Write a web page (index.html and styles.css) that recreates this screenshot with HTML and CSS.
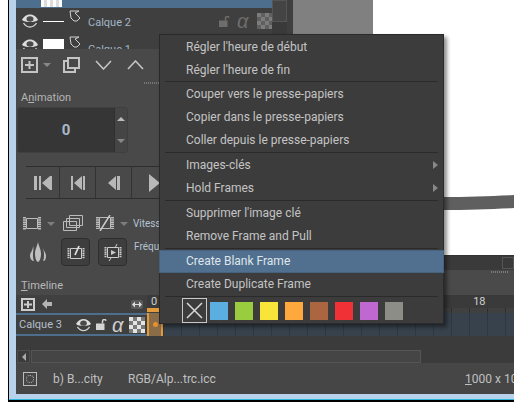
FILE: index.html
```html
<!DOCTYPE html>
<html lang="fr">
<head>
    <meta charset="UTF-8">
    <title>Timeline</title>
    <link rel="stylesheet" href="styles.css">
</head>
<body>
    <svg class="defs" width="0" height="0">
        <symbol id="eye" viewBox="0 0 16 14">
            <path d="M0 6C2 2 5 .5 8 .5S14 2 16 6c-2 1.500-4 2-8 2S2 7.500 0 6z" fill="#dcdcdc"/>
            <ellipse cx="8" cy="5" rx="3.500" ry="2.800" fill="#4a4a4a"/>
            <path d="M1.500 9c2 3 4 4 6.500 4s4.500-1 6.500-4" fill="none" stroke="#d0d0d0" stroke-width="1.300"/>
        </symbol>
        <symbol id="inherit" viewBox="0 0 12 12">
            <path d="M1 1h9l-4 2 5 5-3 3H5L2 8z" fill="none" stroke="#d0d0d0"/>
        </symbol>
        <symbol id="lock" viewBox="0 0 11 11">
            <path d="M0 4.500h8.500V11H0z" fill="currentColor"/>
            <path d="M6.500 4.500V2.200a1.800 1.800 0 0 1 3.500-.5" fill="none" stroke="currentColor" stroke-width="1.500"/>
        </symbol>
        <symbol id="checker" viewBox="0 0 16 16">
            <rect width="16" height="16" fill="currentColor"/>
            <path d="M4 0h4v4H4zM12 0h4v4h-4zM0 4h4v4H0zM8 4h4v4H8zM4 8h4v4H4zM12 8h4v4h-4zM0 12h4v4H0zM8 12h4v4H8z" fill="#555" fill-opacity=".75"/>
        </symbol>
    </svg>

    <div class="window">
        <div class="row-top">
            <div class="layers">
                <div class="layer-list">
                    <div class="layer layer-active">
                        <span class="layer-thumb thumb-checker"></span>
                    </div>
                    <div class="layer layer-two">
                        <svg class="layer-eye"><use href="#eye"/></svg>
                        <span class="layer-thumb thumb-line"></span>
                        <svg class="layer-inherit"><use href="#inherit"/></svg>
                        <span class="layer-name">Calque 2</span>
                        <svg class="prop-lock"><use href="#lock"/></svg>
                        <span class="prop-alpha">α</span>
                        <svg class="prop-checker"><use href="#checker"/></svg>
                    </div>
                    <div class="layer layer-three">
                        <svg class="layer-eye"><use href="#eye"/></svg>
                        <span class="layer-thumb thumb-white"></span>
                        <svg class="layer-inherit"><use href="#inherit"/></svg>
                        <span class="layer-name">Calque 1</span>
                    </div>
                </div>
                <div class="layer-scroll"><span class="layer-scroll-thumb"></span></div>
            </div>
            <div class="canvas-grey"></div>
        </div>

        <div class="row-mid">
            <div class="dock">
                <div class="dock-tools">
                    <svg class="ic" width="17" height="16" viewBox="0 0 17 16"><path d="M1 1h15v14H1z" fill="none" stroke="#c4c4c4" stroke-width="2"/><path d="M4 8h9M8.500 4v8" stroke="#c4c4c4" stroke-width="2"/></svg>
                    <span class="tri-down"></span>
                    <svg class="ic tool-dup" width="17" height="16" viewBox="0 0 17 16"><path d="M5 1h11v10H5zM5 4H1v11h11v-4" fill="none" stroke="#c4c4c4" stroke-width="2"/></svg>
                    <svg class="ic tool-down" width="17" height="10" viewBox="0 0 17 10"><path d="M1 1l7.500 8L16 1" fill="none" stroke="#c4c4c4" stroke-width="1.600"/></svg>
                    <svg class="ic tool-up" width="17" height="10" viewBox="0 0 17 10"><path d="M1 9l7.500-8L16 9" fill="none" stroke="#c4c4c4" stroke-width="1.600"/></svg>
                </div>
                <div class="grip"></div>
                <div class="dock-title">A<u>n</u>imation</div>
                <div class="spin">
                    <span class="spin-value">0</span>
                    <span class="spin-btns"><i class="spin-up"></i><i class="spin-down"></i></span>
                </div>
                <div class="transport">
                    <div class="transport-btn">
                        <svg width="18" height="14" viewBox="0 0 18 14"><path d="M0 0h3v14H0zM5 0h2v14H5zM8 7l8-7v14zM16 0h2v14h-2z" fill="#b8b8b8"/></svg>
                    </div>
                    <div class="transport-btn">
                        <svg width="14" height="14" viewBox="0 0 14 14"><path d="M0 0h2v14H0zM3 7l8-7v14zM12 0h2v14h-2z" fill="#b8b8b8"/></svg>
                    </div>
                    <div class="transport-btn">
                        <svg width="12" height="14" viewBox="0 0 12 14"><path d="M0 7l8-7v14zM9 0h3v14H9z" fill="#b8b8b8"/></svg>
                    </div>
                    <div class="transport-btn">
                        <svg width="12" height="18" viewBox="0 0 12 18"><path d="M1 0l11 9-11 9z" fill="#b8b8b8"/></svg>
                    </div>
                </div>
                <div class="frame-tools">
                    <svg class="ic" width="18" height="13" viewBox="0 0 18 13"><path d="M3.500 1.500h11v10h-11z" fill="none" stroke="#bbb"/><path d="M1.500 0v13M16.500 0v13" stroke="#bbb" stroke-dasharray="1.500 .7" stroke-width="3"/></svg>
                    <span class="tri-down tri-small"></span>
                    <svg class="ic tool-copy" width="20" height="16" viewBox="0 0 20 16"><path d="M6.500.5h13v10h-13zM3.500 3.500h13v9h-13zM.5 6.500h13v9H.500z" fill="#4a4a4a" stroke="#bbb"/></svg>
                    <svg class="ic tool-none" width="18" height="16" viewBox="0 0 18 16"><path d="M3.500 2.500h11v11h-11z" fill="none" stroke="#bbb"/><path d="M1.500 2v12M16.500 2v12" stroke="#bbb" stroke-dasharray="1.500 .7" stroke-width="3"/><path d="M4 16L14 0" stroke="#ccc" stroke-width="1.500"/></svg>
                    <span class="tri-down tri-small"></span>
                    <span class="speed-label">Vitess</span>
                </div>
                <div class="frame-tools-2">
                    <svg class="ic drop" width="18" height="20" viewBox="0 0 18 20"><path d="M9 0c1 5 3 7 3 12s-2 8-3 8-3-3-3-8 2-7 3-12zM4 4C4 9 1 10 1 14c0 3 2 5 4 5-1-2-1-4-1-7 0-3 1-5 0-8zM14 4c0 3 1 5 1 8 0 3 0 5-1 7 2 0 3-2 3-5 0-4-3-5-3-10z" fill="#c0c0c0"/></svg>
                    <span class="frame-btn">
                        <svg width="18" height="15" viewBox="0 0 18 15"><path d="M3.500 3.500h11v10h-11z" fill="none" stroke="#ccc"/><path d="M1.500 3v11M16.500 3v11" stroke="#ccc" stroke-dasharray="1.500 .7" stroke-width="2"/><path d="M8 10l4-9" stroke="#ddd" stroke-width="1.800"/></svg>
                    </span>
                    <span class="frame-btn">
                        <svg width="18" height="17" viewBox="0 0 18 17"><path d="M3.500 3.500h11v10h-11z" fill="none" stroke="#ccc"/><path d="M1.500 3v11M16.500 3v11" stroke="#ccc" stroke-dasharray="1.500 .7" stroke-width="2"/><path d="M7 6l5 2.500L7 11z" fill="#ccc"/><path d="M11 4l2-4M5 17l2-3" stroke="#ccc"/></svg>
                    </span>
                    <span class="freq-label">Fréqu</span>
                </div>
                <div class="timeline-title"><u>T</u>imeline</div>
            </div>

            <div class="mid-right">
                <div class="canvas-white">
                    <svg class="stroke" width="72" height="17" viewBox="0 0 72 17"><path d="M0 3C24 3 50 2 72 1v13C50 15 24 16 0 16z" fill="#5f5f5f"/></svg>
                </div>
                <div class="dock-strip"><span class="strip-box"></span></div>
                <div class="dock-strip-light"><span class="strip-grip"></span></div>
            </div>
        </div>

        <div class="timeline">
            <div class="tl-head">
                <svg class="ic" width="14" height="13" viewBox="0 0 14 13"><path d="M1 1h12v11H1z" fill="none" stroke="#ccc" stroke-width="2"/><path d="M3 6.500h8M7 3v7" stroke="#ccc" stroke-width="2"/></svg>
                <svg class="ic tl-back" width="10" height="10" viewBox="0 0 10 10"><path d="M0 5l5-5v3h5v4H5v3z" fill="#b4b4b4"/></svg>
                <svg class="ic tl-size" width="12" height="9" viewBox="0 0 12 9"><rect width="12" height="9" rx="2" fill="#5a5a5a"/><path d="M1 4.500l3-3v6zM11 4.500l-3-3v6zM4 4h4v1H4z" fill="#ddd"/></svg>
                <div class="ruler">
                    <span class="ruler-zero">0</span>
                    <span class="ruler-mark">18</span>
                </div>
            </div>
            <div class="tl-row">
                <div class="tl-layer">
                    <span class="tl-name">Calque 3</span>
                    <svg class="tl-eye"><use href="#eye"/></svg>
                    <svg class="tl-lock"><use href="#lock"/></svg>
                    <span class="tl-alpha">α</span>
                    <svg class="tl-checker"><use href="#checker"/></svg>
                </div>
                <div class="frame-active"><i></i></div>
                <div class="frames"></div>
            </div>
            <div class="tl-gap"></div>
            <div class="tl-scroll">
                <span class="tl-scroll-btn"><i></i></span>
                <span class="tl-scroll-track"></span>
            </div>
        </div>

        <div class="status">
            <span class="status-sel"><i></i></span>
            <span class="status-brush">b) B...city</span>
            <span class="status-profile">RGB/Alp...trc.icc</span>
            <span class="status-size"><u>1</u>000 x 100</span>
        </div>
    </div>

    <div class="menu">
        <div class="menu-item">Régler l'heure de début</div>
        <div class="menu-item menu-short">Régler l'heure de fin</div>
        <div class="menu-sep"></div>
        <div class="menu-item">Couper vers le presse-papiers</div>
        <div class="menu-item">Copier dans le presse-papiers</div>
        <div class="menu-item">Coller depuis le presse-papiers</div>
        <div class="menu-sep"></div>
        <div class="menu-item menu-sub">Images-clés</div>
        <div class="menu-item menu-sub">Hold Frames</div>
        <div class="menu-sep"></div>
        <div class="menu-item">Supprimer l'image clé</div>
        <div class="menu-item">Remove Frame and Pull</div>
        <div class="menu-sep"></div>
        <div class="menu-item menu-hover">Create Blank Frame</div>
        <div class="menu-item">Create Duplicate Frame</div>
        <div class="menu-sep"></div>
        <div class="swatches">
            <span class="swatch-none">
                <svg width="19" height="19" viewBox="0 0 19 19"><path d="M2 2l15 15M17 2L2 17" stroke="#d8d8d8" stroke-width="1.500"/></svg>
            </span>
            <span class="swatch c-blue"></span>
            <span class="swatch c-green"></span>
            <span class="swatch c-yellow"></span>
            <span class="swatch c-orange"></span>
            <span class="swatch c-brown"></span>
            <span class="swatch c-red"></span>
            <span class="swatch c-purple"></span>
            <span class="swatch c-grey"></span>
        </div>
    </div>
</body>
</html>
```

FILE: styles.css
```css
html, body {
    margin: 0;
    height: 410px;
    overflow: hidden;
    background-color: #fff;
}
body {
    font-family: Roboto, "Open Sans", sans-serif;
    font-size: 11px;
    color: #c8c8c8;
}
.defs {
    display: block;
    height: 0;
}
.ic {
    display: block;
    flex: none;
}

/* window frame */
.window {
    display: flex;
    flex-direction: column;
    box-sizing: border-box;
    width: 506px;
    height: 402px;
    margin-left: 8px;
    padding-left: 7px;
    padding-bottom: 6px;
    border-left: 1px solid #000;
    border-bottom: 2px solid #000;
    box-shadow: inset 0 -1px 0 #2cb7dc;
    background-color: #b8d2ec;
    overflow: hidden;
}

/* layers */
.row-top {
    display: flex;
    flex: none;
    height: 49px;
    background-color: #fff;
}
.layers {
    display: flex;
    width: 277px;
    background-color: #3f3f3f;
}
.layer-list {
    width: 256px;
    overflow: hidden;
}
.layer {
    display: flex;
    align-items: center;
    overflow: hidden;
}
.layer-active {
    height: 8px;
    align-items: flex-start;
    background-color: #4e6e8e;
}
.layer-two {
    height: 26px;
}
.layer-three {
    height: 15px;
    align-items: flex-start;
    padding-top: 5px;
    box-sizing: border-box;
}
.layer-eye {
    width: 16px;
    height: 14px;
    margin: 0 5px 0 6px;
    flex: none;
}
.layer-thumb {
    display: block;
    flex: none;
    width: 21px;
    height: 15px;
    margin-right: 5px;
}
.layer-active .layer-thumb {
    height: 7px;
    margin-left: 25px;
    background-color: #eee;
    background-image: linear-gradient(90deg, #fff 50%, #ddd 50%);
    background-size: 6px 6px;
}
.thumb-line {
    background: linear-gradient(#3f3f3f 7px, #fff 7px, #fff 8px, #3f3f3f 8px);
}
.thumb-white {
    background-color: #fff;
}
.layer-inherit {
    width: 12px;
    height: 12px;
    flex: none;
    margin-right: 7px;
}
.layer-two .layer-inherit {
    margin-top: -11px;
}
.layer-three .layer-inherit {
    margin-top: -3px;
}
.layer-name {
    color: #a3b6c8;
    font-size: 11px;
    flex: none;
    width: 131px;
}
.layer-two .layer-name {
    margin-top: 2px;
}
.layer-three .layer-name {
    margin-top: 4px;
}
.prop-lock {
    width: 11px;
    height: 11px;
    flex: none;
    color: #6d6d6d;
}
.prop-alpha {
    flex: none;
    width: 20px;
    margin-left: 7px;
    font-family: "Liberation Sans", sans-serif;
    font-size: 20px;
    line-height: 17px;
    font-style: italic;
    color: #6d6d6d;
}
.prop-checker {
    width: 16px;
    height: 16px;
    flex: none;
    color: #7c7c7c;
}
.layer-scroll {
    width: 15px;
    background-color: #3a3a3a;
}
.layer-scroll-thumb {
    display: block;
    width: 13px;
    height: 20px;
    border: 1px solid #555;
    background-color: #444;
}
.canvas-grey {
    width: 80px;
    height: 34px;
    background-color: #808080;
}

/* left dock */
.row-mid {
    display: flex;
    flex: none;
    height: 246px;
}
.dock {
    flex: none;
    width: 143px;
    box-sizing: border-box;
    background-color: #494949;
    overflow: hidden;
}
.dock-tools {
    display: flex;
    align-items: center;
    height: 16px;
    padding: 8px 0 0 5px;
}
.tri-down {
    width: 0;
    height: 0;
    margin-left: 5px;
    border-style: solid;
    border-width: 4px 4px 0;
    border-color: #888 transparent transparent;
    flex: none;
}
.tri-small {
    margin: 2px 0 0 6px;
    border-color: #7d7d7d transparent transparent;
}
.tool-dup {
    margin-left: 12px;
}
.tool-down {
    margin-left: 15px;
}
.tool-up {
    margin-left: 15px;
}
.grip {
    width: 16px;
    height: 2px;
    margin: 9px 0 0 128px;
    background-image: linear-gradient(90deg, #777 50%, transparent 50%);
    background-size: 2px 2px;
}
.dock-title {
    margin: 6px 0 0 5px;
    height: 15px;
    line-height: 15px;
    font-size: 11px;
    color: #b4b4b4;
}
.spin {
    display: flex;
    width: 111px;
    height: 46px;
    margin: 2px 0 0 1px;
    box-sizing: border-box;
    border: 1px solid #3f3f3f;
    border-radius: 3px;
    background-color: #363636;
}
.spin-value {
    flex: 1;
    text-align: center;
    line-height: 44px;
    font-size: 15px;
    font-weight: 700;
    color: #a7b9c9;
}
.spin-btns {
    display: flex;
    flex-direction: column;
    justify-content: space-between;
    align-items: center;
    width: 13px;
    padding: 9px 0;
    box-sizing: border-box;
    border-left: 1px solid #303030;
    background-color: #454545;
}
.spin-btns i {
    width: 0;
    height: 0;
    border-style: solid;
    border-color: transparent;
}
.spin-up {
    border-width: 0 4px 4px !important;
    border-bottom-color: #bbb !important;
}
.spin-down {
    border-width: 4px 4px 0 !important;
    border-top-color: #888 !important;
}
.transport {
    display: flex;
    height: 31px;
    margin: 13px 0 0 10px;
    border-top: 1px solid #2e2e2e;
    border-bottom: 1px solid #2e2e2e;
}
.transport-btn {
    display: flex;
    align-items: center;
    justify-content: center;
    flex: none;
    width: 36px;
    box-sizing: border-box;
    border-right: 1px solid #333;
}
.transport-btn:first-child {
    width: 34px;
    padding-left: 1px;
}
.transport-btn:last-child {
    border-right: 0;
    padding-left: 8px;
}
.frame-tools {
    display: flex;
    align-items: center;
    height: 18px;
    margin: 15px 0 0 7px;
}
.tool-copy {
    margin-left: 8px;
}
.tool-none {
    margin-left: 13px;
}
.speed-label, .freq-label {
    flex: none;
    font-size: 10px;
    color: #b4c4d2;
}
.speed-label {
    margin-left: 5px;
}
.frame-tools-2 {
    display: flex;
    align-items: center;
    height: 28px;
    margin: 6px 0 0 13px;
}
.drop {
    margin-right: 14px;
}
.frame-btn {
    display: flex;
    align-items: center;
    justify-content: center;
    flex: none;
    box-sizing: border-box;
    width: 29px;
    height: 28px;
    margin-right: 8px;
    border: 1px solid #2e2e2e;
    border-radius: 4px;
    background-color: #3e3e3e;
}
.freq-label {
    margin: -12px 0 0 -1px;
}
.timeline-title {
    margin: 13px 0 0 5px;
    font-size: 11px;
    line-height: 14px;
    color: #b8b8b8;
}

/* canvas and the dock strip on the right */
.mid-right {
    display: flex;
    flex-direction: column;
    flex: 1;
    background-color: #fff;
}
.canvas-white {
    position: relative;
    height: 206px;
    background-color: #fff;
}
.stroke {
    position: absolute;
    right: -1px;
    top: 145px;
}
.dock-strip {
    display: flex;
    justify-content: flex-end;
    height: 14px;
    background-color: #3a3a3a;
    border-top: 1px solid #333;
}
.strip-box {
    width: 10px;
    height: 10px;
    margin: 1px 0 0;
    border: 1px solid #555;
}
.dock-strip-light {
    flex: 1;
    background-color: #4a4a4a;
}
.strip-grip {
    display: block;
    width: 18px;
    height: 2px;
    margin: 1px 0 0 332px;
    background-image: linear-gradient(90deg, #7a7a7a 50%, transparent 50%);
    background-size: 2px 2px;
}

/* timeline */
.timeline {
    flex: none;
    background-color: #3b3b3b;
}
.tl-head {
    display: flex;
    align-items: center;
    height: 18px;
    padding-left: 5px;
    background-color: #404040;
}
.tl-back {
    margin-left: 7px;
}
.tl-size {
    margin-left: 79px;
}
.ruler {
    flex: 1;
    display: flex;
    align-self: stretch;
    align-items: flex-start;
    margin-left: 4px;
    background-color: #3a3a3a;
    background-image: linear-gradient(90deg, #2f2f2f 1px, #404040 1px);
    background-size: 18px 5px;
    background-repeat: repeat-x;
    background-position: 16px bottom;
    font-size: 11px;
    line-height: 14px;
    color: #d0d0d0;
}
.ruler-zero {
    margin-left: 4px;
}
.ruler-mark {
    margin-left: 316px;
}
.tl-row {
    display: flex;
    height: 23px;
}
.tl-layer {
    display: flex;
    align-items: center;
    flex: none;
    width: 131px;
    box-sizing: border-box;
    border-top: 2px solid #4e6e8e;
    border-bottom: 2px solid #4e6e8e;
    background-color: #3f3f3f;
}
.tl-name {
    flex: none;
    width: 57px;
    margin-left: 3px;
    font-size: 11px;
    color: #b4bfc9;
}
.tl-eye {
    width: 15px;
    height: 14px;
    flex: none;
}
.tl-lock {
    width: 11px;
    height: 11px;
    margin-left: 5px;
    flex: none;
    color: #d4d4d4;
}
.tl-alpha {
    flex: none;
    width: 17px;
    margin-left: 5px;
    font-family: "Liberation Sans", sans-serif;
    font-size: 20px;
    line-height: 18px;
    font-style: italic;
    color: #d0d0d0;
}
.tl-checker {
    width: 16px;
    height: 16px;
    flex: none;
    color: #e4e4e4;
}
.frame-active {
    display: flex;
    align-items: center;
    justify-content: center;
    position: relative;
    flex: none;
    width: 16px;
    box-sizing: border-box;
    border-left: 2px solid #e39a3b;
    border-right: 2px solid #e39a3b;
    background-color: #8a6c49;
}
.frame-active::before {
    content: "";
    position: absolute;
    left: -2px;
    right: -2px;
    top: -5px;
    height: 4px;
    background-color: #e39a3b;
}
.frame-active i {
    width: 5px;
    height: 5px;
    border-radius: 50%;
    background-color: #e8902c;
}
.frames {
    flex: 1;
    background-color: #38424c;
    background-image: linear-gradient(90deg, #2f373f 1px, transparent 1px);
    background-size: 18px 100%;
}
.tl-gap {
    height: 14px;
}
.tl-scroll {
    display: flex;
    height: 13px;
    background-color: #3b3b3b;
}
.tl-scroll-btn {
    display: flex;
    align-items: center;
    justify-content: center;
    width: 13px;
    margin-left: 1px;
    box-sizing: border-box;
    border: 1px solid #4e4e4e;
}
.tl-scroll-btn i {
    width: 0;
    height: 0;
    border-style: solid;
    border-width: 4px 4px 4px 0;
    border-color: transparent #aaa transparent transparent;
}
.tl-scroll-track {
    width: 390px;
    margin-left: 1px;
    box-sizing: border-box;
    border: 1px solid #555;
    background-color: #454545;
}

/* status bar */
.status {
    display: flex;
    align-items: center;
    flex: 1;
    font-size: 12px;
    color: #c0c0c0;
    background-color: #464646;
}
.status-sel {
    display: flex;
    align-items: center;
    justify-content: center;
    width: 14px;
    height: 14px;
    margin-left: 7px;
    box-sizing: border-box;
    border: 1px solid #bbb;
    flex: none;
}
.status-sel i {
    width: 8px;
    height: 8px;
    box-sizing: border-box;
    border: 1px dotted #bbb;
    border-radius: 50%;
}
.status-brush {
    margin-left: 16px;
    width: 75px;
    flex: none;
}
.status-profile {
    width: 337px;
    flex: none;
}
.status-size {
    flex: none;
    white-space: nowrap;
}

/* context menu, lies over everything */
.menu {
    position: absolute;
    left: 159px;
    top: 34px;
    box-sizing: border-box;
    width: 285px;
    height: 290px;
    padding-top: 1px;
    border: 1px solid #2a2a2a;
    background-color: #3c3c3c;
    box-shadow: 3px 3px 4px rgba(0,0,0,0.45);
    font-size: 12px;
    color: #c4c4c4;
}
.menu-item {
    position: relative;
    height: 23px;
    line-height: 22px;
    padding-left: 26px;
    white-space: nowrap;
}
.menu-short {
    height: 22px;
}
.menu-sep {
    height: 1px;
    margin: 0 5px 1px;
    background-color: #2a2a2a;
}
.menu-sub::after {
    content: "";
    position: absolute;
    right: 5px;
    top: 7px;
    border-style: solid;
    border-width: 4px 0 4px 5px;
    border-color: transparent transparent transparent #888;
}
.menu-hover {
    margin: 0 -1px;
    padding-left: 26px;
    box-sizing: border-box;
    border: 1px solid #45627e;
    background-color: #51708f;
    line-height: 20px;
    color: #dfe5ea;
}
.swatches {
    display: flex;
    align-items: center;
    gap: 7px;
    height: 25px;
    padding-left: 22px;
}
.swatch-none {
    display: flex;
    align-items: center;
    justify-content: center;
    box-sizing: border-box;
    width: 25px;
    height: 25px;
    margin-right: -4px;
    border: 1px solid #c8c8c8;
}
.swatch {
    width: 18px;
    height: 18px;
    flex: none;
}
.c-blue { background-color: #5aaee0; }
.c-green { background-color: #99cc3f; }
.c-yellow { background-color: #f9e539; }
.c-orange { background-color: #ffa83c; }
.c-brown { background-color: #ab6641; }
.c-red { background-color: #f03237; }
.c-purple { background-color: #bf68d2; }
.c-grey { background-color: #8c8d87; }
```
